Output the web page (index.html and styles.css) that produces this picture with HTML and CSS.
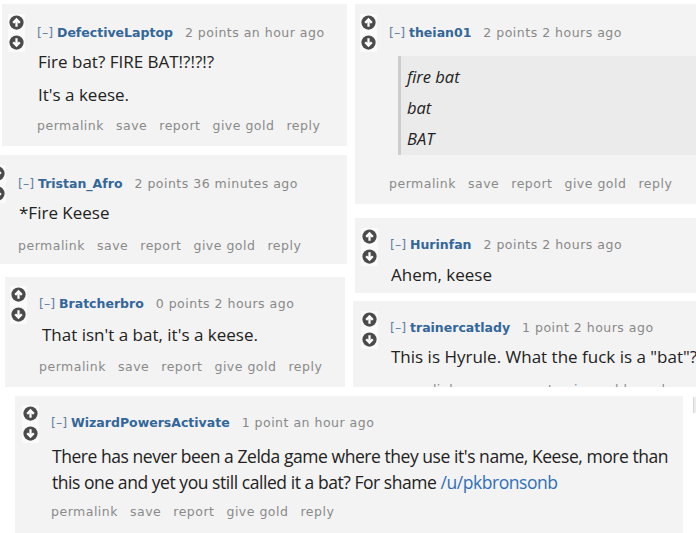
FILE: index.html
```html
<!DOCTYPE html>
<html lang="en">
<head>
<meta charset="utf-8">
<title>Keese comments</title>
<link rel="stylesheet" href="styles.css">
</head>
<body>
<svg width="0" height="0" class="defs" aria-hidden="true">
  <defs>
    <symbol id="up" viewBox="0 0 16 16">
      <circle cx="8" cy="8" r="7.6" fill="#4b4b4b"/>
      <path d="M8 3 L3.6 7.5 L5.4 9.2 L6.8 7.8 V12.6 H9.2 V7.8 L10.6 9.2 L12.4 7.5 Z" fill="#fff"/>
    </symbol>
    <symbol id="down" viewBox="0 0 16 16">
      <circle cx="8" cy="8" r="7.6" fill="#4b4b4b"/>
      <path d="M8 13 L3.6 8.5 L5.4 6.8 L6.8 8.2 V3.4 H9.2 V8.2 L10.6 6.8 L12.4 8.5 Z" fill="#fff"/>
    </symbol>
  </defs>
</svg>
<main class="collage">
  <div class="col col-left">
    <article class="comment c1">
      <div class="votes"><svg class="arrow"><use href="#up"/></svg><svg class="arrow"><use href="#down"/></svg></div>
      <div class="entry">
        <p class="tagline"><span class="expand">[–]</span> <span class="author">DefectiveLaptop</span> <span class="meta">2 points an hour ago</span></p>
        <div class="md">
          <p>Fire bat? FIRE BAT!?!?!?</p>
          <p>It's a keese.</p>
        </div>
        <ul class="buttons"><li>permalink</li><li>save</li><li>report</li><li>give gold</li><li>reply</li></ul>
      </div>
    </article>
    <article class="comment c3">
      <div class="votes"><svg class="arrow"><use href="#up"/></svg><svg class="arrow"><use href="#down"/></svg></div>
      <div class="entry">
        <p class="tagline"><span class="expand">[–]</span> <span class="author">Tristan_Afro</span> <span class="meta">2 points 36 minutes ago</span></p>
        <div class="md">
          <p>*Fire Keese</p>
        </div>
        <ul class="buttons"><li>permalink</li><li>save</li><li>report</li><li>give gold</li><li>reply</li></ul>
      </div>
    </article>
    <article class="comment c4">
      <div class="votes"><svg class="arrow"><use href="#up"/></svg><svg class="arrow"><use href="#down"/></svg></div>
      <div class="entry">
        <p class="tagline"><span class="expand">[–]</span> <span class="author">Bratcherbro</span> <span class="meta">0 points 2 hours ago</span></p>
        <div class="md">
          <p>That isn't a bat, it's a keese.</p>
        </div>
        <ul class="buttons"><li>permalink</li><li>save</li><li>report</li><li>give gold</li><li>reply</li></ul>
      </div>
    </article>
  </div>
  <div class="col col-right">
    <article class="comment c2">
      <div class="votes"><svg class="arrow"><use href="#up"/></svg><svg class="arrow"><use href="#down"/></svg></div>
      <div class="entry">
        <p class="tagline"><span class="expand">[–]</span> <span class="author">theian01</span> <span class="meta">2 points 2 hours ago</span></p>
        <blockquote class="quote">
          <p>fire bat</p>
          <p>bat</p>
          <p>BAT</p>
        </blockquote>
        <ul class="buttons"><li>permalink</li><li>save</li><li>report</li><li>give gold</li><li>reply</li></ul>
      </div>
    </article>
    <article class="comment c5">
      <div class="votes"><svg class="arrow"><use href="#up"/></svg><svg class="arrow"><use href="#down"/></svg></div>
      <div class="entry">
        <p class="tagline"><span class="expand">[–]</span> <span class="author">Hurinfan</span> <span class="meta">2 points 2 hours ago</span></p>
        <div class="md">
          <p>Ahem, keese</p>
        </div>
        <ul class="buttons"><li>permalink</li><li>save</li><li>report</li><li>give gold</li><li>reply</li></ul>
      </div>
    </article>
    <article class="comment c6">
      <div class="votes"><svg class="arrow"><use href="#up"/></svg><svg class="arrow"><use href="#down"/></svg></div>
      <div class="entry">
        <p class="tagline"><span class="expand">[–]</span> <span class="author">trainercatlady</span> <span class="meta">1 point 2 hours ago</span></p>
        <div class="md">
          <p>This is Hyrule. What the fuck is a "bat"?</p>
        </div>
        <ul class="buttons"><li>permalink</li><li>save</li><li>report</li><li>give gold</li><li>reply</li></ul>
      </div>
    </article>
  </div>
  <div class="bottom-row">
    <article class="comment c7">
      <div class="votes"><svg class="arrow"><use href="#up"/></svg><svg class="arrow"><use href="#down"/></svg></div>
      <div class="entry">
        <p class="tagline"><span class="expand">[–]</span> <span class="author">WizardPowersActivate</span> <span class="meta">1 point an hour ago</span></p>
        <div class="md">
          <p>There has never been a Zelda game where they use it's name, Keese, more than this one and yet you still called it a bat? For shame <a class="ulink">/u/pkbronsonb</a></p>
        </div>
        <ul class="buttons"><li>permalink</li><li>save</li><li>report</li><li>give gold</li><li>reply</li></ul>
      </div>
    </article>
    <div class="sliver"></div>
  </div>
</main>
</body>
</html>
```
FILE: styles.css
```css
* { box-sizing: border-box; }

html, body {
  margin: 0;
  padding: 0;
  background: #fff;
  width: 696px;
  height: 533px;
  overflow: hidden;
}

.defs { position: absolute; width: 0; height: 0; }

.collage {
  display: grid;
  grid-template-columns: 350px 346px;
  width: 696px;
}

.col {
  display: flex;
  flex-direction: column;
  align-items: flex-start;
}

.col-left { padding-top: 4px; }
.col-right { padding-top: 4px; }

.comment {
  display: flex;
  align-items: flex-start;
  background: #f3f3f3;
  overflow: hidden;
  padding: 10px 0 0 6px;
  flex-shrink: 0;
}

.votes {
  display: flex;
  flex-direction: column;
  gap: 5px;
  background: #fafafa;
  padding: 1px 1px 2px;
  flex-shrink: 0;
}

.arrow { width: 15px; height: 15px; display: block; }

.entry {
  padding-top: 11px;
  margin-left: 12px;
  white-space: nowrap;
}

.tagline {
  margin: 0;
  font-family: "DejaVu Sans", Verdana, sans-serif;
  font-size: 12.5px;
  line-height: 16px;
  color: #888;
}

.expand { color: #5f7ea4; }
.author { color: #336699; font-weight: bold; margin-right: 8px; }
.meta { letter-spacing: 0.5px; }

.md {
  margin-top: 10px;
  padding-left: 1px;
  font-family: "Open Sans", "Noto Sans", sans-serif;
  font-size: 17px;
  line-height: 22px;
  color: #222;
}

.md p { margin: 0 0 11px; }
.md p:last-child { margin-bottom: 0; }

.ulink { color: #2f6fb8; text-decoration: none; }

.buttons {
  list-style: none;
  margin: 12px 0 0;
  padding: 0;
  display: flex;
  gap: 12px;
  font-family: "DejaVu Sans", Verdana, sans-serif;
  font-size: 12.5px;
  letter-spacing: 0.5px;
  line-height: 16px;
  color: #8a8a8a;
}

.quote {
  margin: 15px 0 0 9px;
  width: 320px;
  border-left: 3px solid #cdcdcd;
  background: #ebebeb;
  padding: 10px 0 5px 6px;
  font-family: "Open Sans", "Noto Sans", sans-serif;
  font-style: italic;
  font-size: 16.5px;
  line-height: 22px;
  color: #222;
}
.quote p { margin: 0 0 9px; }
.quote p:last-child { margin-bottom: 0; }

/* individual crops */
.c1 { margin-left: 2px; width: 345px; height: 142px; }
.c3 { margin-top: 9px; width: 347px; height: 109px; padding-left: 0; }
.c3 .votes { margin-left: -11px; }
.c3 .buttons { margin-top: 14px; }
.c4 { margin-top: 13px; margin-left: 5px; width: 340px; height: 110px; padding-top: 9px; padding-left: 5px; }
.c4 .entry { padding-top: 10px; }
.c4 .md { margin-top: 12px; padding-left: 3px; }
.c4 .buttons { margin-top: 13px; }

.c2 { margin-left: 5px; width: 341px; height: 200px; padding-left: 5px; }
.c2 .buttons { margin-top: 21px; }
.c5 { margin-top: 14px; margin-left: 5px; width: 341px; height: 75px; padding-left: 6px; }
.c5 .entry { padding-top: 9px; }
.c5 .md { margin-top: 11px; }
.c6 { margin-top: 8px; margin-left: 3px; width: 343px; height: 86px; padding-left: 8px; padding-top: 10px; }
.c6 .entry { padding-top: 9px; }
.c6 .md { margin-top: 10px; }
.c6 .buttons { margin-top: 14px; }

.bottom-row {
  grid-column: 1 / -1;
  display: flex;
  align-items: flex-start;
  margin-top: 9px;
}

.c7 {
  margin-left: 15px;
  width: 668px;
  height: 137px;
  padding-top: 9px;
  padding-left: 7px;
}
.c7 .entry { padding-top: 10px; white-space: normal; width: 630px; }
.c7 .md { font-size: 17.5px; line-height: 26px; margin-top: 12px; letter-spacing: -0.45px; }
.c7 .buttons { margin-top: 9px; }

.sliver {
  margin-left: 10px;
  margin-top: 1px;
  width: 3px;
  height: 16px;
  background: #ececec;
  border-left: 1px solid #d6d6d6;
}
```
